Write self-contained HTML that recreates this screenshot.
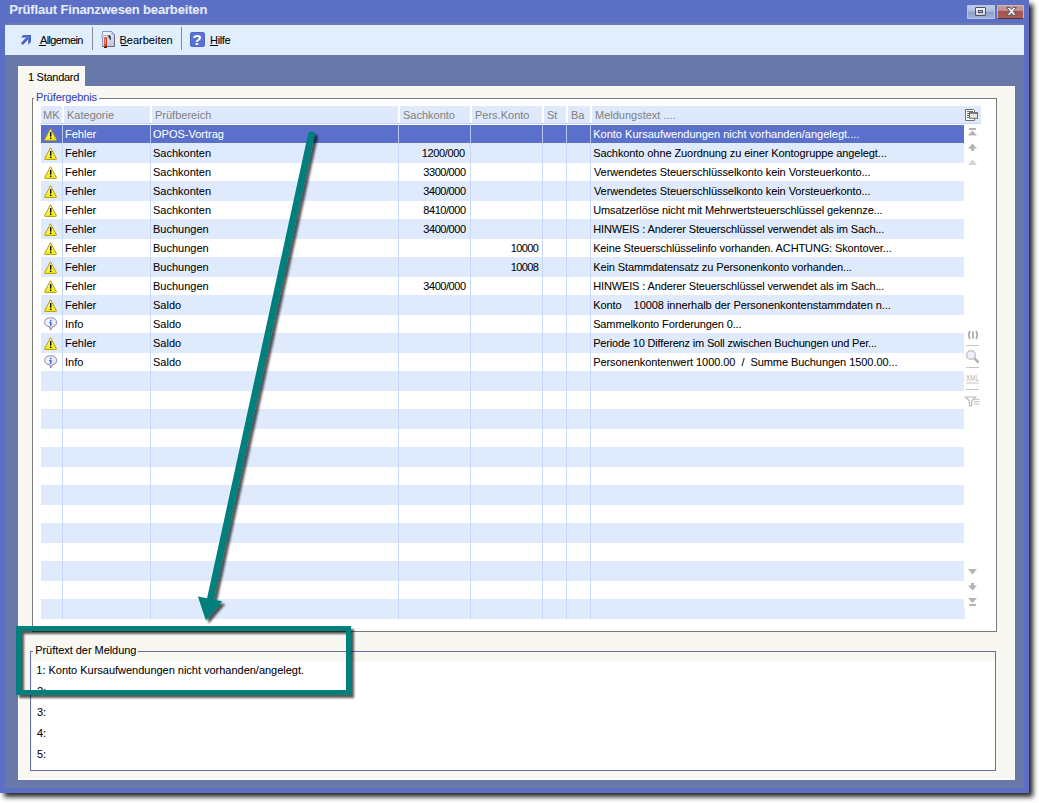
<!DOCTYPE html>
<html><head><meta charset="utf-8">
<style>
*{margin:0;padding:0;box-sizing:border-box}
html,body{width:1039px;height:803px;overflow:hidden;background:#fff}
body{position:relative;font-family:"Liberation Sans",sans-serif;font-size:11px;color:#000}
.a{position:absolute}
.t{position:absolute;white-space:pre;line-height:13px;-webkit-text-stroke:0.06px currentColor}
#win{left:0;top:0;width:1029px;height:793px;background:#5b70c5;box-shadow:4px 4px 5px rgba(0,0,0,.85)}
.hd{position:absolute;top:106px;height:17px;background:#dee9fb}
.hdt{position:absolute;top:109px;color:#808080;white-space:pre;line-height:13px}
.ln{position:absolute;width:1px;background:#c8d8fa}
.rowb{position:absolute;left:41px;width:923px;height:20px;background:#dfebfd}
.ct{position:absolute;white-space:pre;line-height:13px;-webkit-text-stroke:0.06px currentColor}
.ic{position:absolute}
</style></head><body>
<div id="win" class="a"></div>

<div id="f_title" class="t" style="left:9.16px;top:2px;letter-spacing:-0.160px;font-size:13px;font-weight:bold;color:#e6ebf7;line-height:15px">Prüflaut Finanzwesen bearbeiten</div>
<div class="a" style="left:967px;top:5px;width:28px;height:14px;background:linear-gradient(#c0cdea 0,#aab9de 45%,#8e9ec4 50%,#a0b0d8 100%);border:1px solid #b8c4e4"></div>
<div class="a" style="left:975px;top:7px;width:11px;height:9px;border:1px solid #505068;border-radius:1px;background:linear-gradient(#f4f4f8,#c8ccd8)"></div>
<div class="a" style="left:978px;top:10px;width:5px;height:3px;border:1px solid #505068;background:#a8b8d8"></div>
<div class="a" style="left:997px;top:5px;width:27px;height:14px;background:linear-gradient(#c69c9c 0,#bc8c8a 40%,#a4544c 44%,#aa5e56 100%);border:1px solid #d8b0a8;border-bottom-color:#603030"></div>
<svg class="a" style="left:1002px;top:5px" width="16" height="13" viewBox="-2 0 16 13"><path d="M2.70 2.45 L6.00 2.45 L7.60 4.39 L9.20 2.45 L12.50 2.45 L9.25 6.40 L12.50 10.35 L9.20 10.35 L7.60 8.41 L6.00 10.35 L2.70 10.35 L5.95 6.40 Z" fill="#f2f2f6" stroke="#4c4c60" stroke-width="0.9" stroke-linejoin="round"/></svg>
<div class="a" style="left:5px;top:23px;width:1019px;height:2px;background:#6a7ab0"></div>
<div class="a" style="left:5px;top:25px;width:1019px;height:30px;background:#e1eefd"></div>
<div class="a" style="left:5px;top:55px;width:1019px;height:733px;background:#6878a8"></div>
<svg class="a" style="left:20px;top:34px" width="12" height="12" viewBox="0 0 12 12"><path d="M3.2 1.1 L11 1.1 L11 8 L8.2 10.7 L8.2 3.6 L0.9 3.6 Z" fill="#4a62cc"/><path d="M0.9 9 L6.8 3.1 L8.7 5 L2.8 10.9 Z" fill="#4a62cc"/></svg>
<div id="f_allg" class="t" style="left:39.92px;top:34px;letter-spacing:-0.600px;">Allgemein</div><div class="a" style="left:39px;top:45px;width:7px;height:1px;background:#000"></div>
<div class="a" style="left:92px;top:27px;width:1px;height:23px;background:#8a8a8a"></div>
<svg class="a" style="left:100px;top:30px" width="17" height="19" viewBox="0 0 17 19"><defs><linearGradient id="dg" x1="0" y1="0" x2="0.6" y2="1"><stop offset="0" stop-color="#ffffff"/><stop offset="1" stop-color="#bcc6f4"/></linearGradient></defs><path d="M2.5 1.5 H11.5 L14.5 4.5 V16.5 H2.5 Z" fill="url(#dg)" stroke="#7e94dc"/><path d="M14.5 4.5 V16.5 H2.5" fill="none" stroke="#6c6c6c"/><path d="M11.5 1.5 L14.5 4.5 H11.5 Z" fill="#7ea0f0"/><rect x="1.5" y="5.2" width="8" height="2.6" fill="#9c9c9c"/><rect x="2" y="5.8" width="6" height="1" fill="#f4f4f4"/><path d="M8.6 5.6 Q10.6 6 10.2 9.6" fill="none" stroke="#111" stroke-width="1.3"/><rect x="4.2" y="7.8" width="2.8" height="10" fill="#e23a0a"/><rect x="4.8" y="9" width="0.9" height="5" fill="#ffb070"/><rect x="4.2" y="16.6" width="2.8" height="1.4" fill="#401008"/></svg>
<div id="f_bearb" class="t" style="left:119.52px;top:34px;">Bearbeiten</div><div class="a" style="left:121px;top:45px;width:7px;height:1px;background:#000"></div>
<div class="a" style="left:181px;top:27px;width:1px;height:23px;background:#8a8a8a"></div>
<div class="a" style="left:190px;top:32px;width:15px;height:15px;border-radius:2px;background:#5a72d4;border:1px solid #5068c8"></div>
<div class="t" style="left:189px;top:31px;width:16px;text-align:center;color:#fff;font-weight:bold;font-size:15px;line-height:17px">?</div>
<div id="f_hilfe" class="t" style="left:210.12px;top:34px;letter-spacing:-0.400px;">Hilfe</div><div class="a" style="left:210px;top:45px;width:8px;height:1px;background:#000"></div>
<div class="a" style="left:18px;top:66px;width:67px;height:21px;background:#f8f7f2;border-top:1px solid #fdfdfc;border-left:1px solid #fdfdfc;border-right:1px solid #fdfdfc"></div>
<div id="f_tab" class="t" style="left:27.96px;top:71px;letter-spacing:-0.267px;">1 Standard</div>
<div class="a" style="left:18px;top:86px;width:997px;height:694px;background:#f8f7f2;border-left:1px solid #fdfdfc;border-top:1px solid #fdfdfc;border-right:1px solid #fefef8;border-bottom:1px solid #fefef8"></div>
<div class="a" style="left:19px;top:85px;width:65px;height:3px;background:#f8f7f2"></div>
<div class="a" style="left:32px;top:98px;width:965px;height:534px;background:#fff;border:1px solid #7a7a7a"></div>
<div class="a" style="left:34px;top:92px;width:65px;height:10px;background:#f8f7f2"></div>
<div id="f_pe" class="t" style="left:36.00px;top:92px;letter-spacing:-0.120px;color:#3042c4;line-height:11px">Prüfergebnis</div>
<div class="hd" style="left:41px;width:21px"></div>
<div class="hdt" style="left:43px">MK</div>
<div class="hd" style="left:64px;width:86px"></div>
<div class="hdt" style="left:67px">Kategorie</div>
<div class="hd" style="left:152px;width:246px"></div>
<div class="hdt" style="left:155px">Prüfbereich</div>
<div class="hd" style="left:400px;width:70px"></div>
<div class="hdt" style="left:403px">Sachkonto</div>
<div class="hd" style="left:472px;width:70px"></div>
<div class="hdt" style="left:475px">Pers.Konto</div>
<div class="hd" style="left:544px;width:22px"></div>
<div class="hdt" style="left:547px">St</div>
<div class="hd" style="left:568px;width:22px"></div>
<div class="hdt" style="left:571px">Ba</div>
<div class="hd" style="left:592px;width:389px"></div>
<div class="hdt" style="left:595px">Meldungstext ....</div>
<div class="a" style="left:41px;top:123px;width:940px;height:1px;background:#c4d6f6"></div>
<svg class="a" style="left:965px;top:109px" width="14" height="13" viewBox="0 0 14 13"><path d="M0.5 0.5 H8.3 L9.5 1.7 V11.5 H0.5 Z" fill="#fff" stroke="#6e6e6e"/><rect x="2" y="2" width="6" height="1" fill="#6e6e6e"/><rect x="2" y="4" width="2.5" height="1" fill="#6e6e6e"/><rect x="2" y="6" width="2.5" height="1" fill="#6e6e6e"/><rect x="2" y="8" width="2.5" height="1" fill="#6e6e6e"/><rect x="4.5" y="3.7" width="8" height="5.6" fill="#e6e6de" stroke="#6e6e6e"/><rect x="4" y="3.2" width="9" height="1.6" fill="#6e6e6e"/></svg>
<div class="rowb" style="top:143px"></div>
<div class="rowb" style="top:181px"></div>
<div class="rowb" style="top:219px"></div>
<div class="rowb" style="top:257px"></div>
<div class="rowb" style="top:295px"></div>
<div class="rowb" style="top:333px"></div>
<div class="rowb" style="top:371px"></div>
<div class="rowb" style="top:409px"></div>
<div class="rowb" style="top:447px"></div>
<div class="rowb" style="top:485px"></div>
<div class="rowb" style="top:523px"></div>
<div class="rowb" style="top:561px"></div>
<div class="rowb" style="top:599px"></div>
<div class="a" style="left:41px;top:125px;width:923px;height:18px;background:#5a70cb"></div>
<div class="a" style="left:964px;top:609px;width:1px;height:10px;background:#dfebfd"></div>
<div class="ln" style="left:62px;top:124px;height:496px"></div>
<div class="ln" style="left:62px;top:125px;height:18px;background:#b8c6ee"></div>
<div class="ln" style="left:150px;top:124px;height:496px"></div>
<div class="ln" style="left:150px;top:125px;height:18px;background:#b8c6ee"></div>
<div class="ln" style="left:398px;top:124px;height:496px"></div>
<div class="ln" style="left:398px;top:125px;height:18px;background:#b8c6ee"></div>
<div class="ln" style="left:470px;top:124px;height:496px"></div>
<div class="ln" style="left:470px;top:125px;height:18px;background:#b8c6ee"></div>
<div class="ln" style="left:542px;top:124px;height:496px"></div>
<div class="ln" style="left:542px;top:125px;height:18px;background:#b8c6ee"></div>
<div class="ln" style="left:566px;top:124px;height:496px"></div>
<div class="ln" style="left:566px;top:125px;height:18px;background:#b8c6ee"></div>
<div class="ln" style="left:590px;top:124px;height:496px"></div>
<div class="ln" style="left:590px;top:125px;height:18px;background:#b8c6ee"></div>
<div class="a" style="left:44px;top:128px;width:13px;height:13px"><svg width="13" height="13" viewBox="0 0 13 13"><defs><linearGradient id="wg0" x1="0" y1="0" x2="0" y2="1"><stop offset="0" stop-color="#fffbb0"/><stop offset="1" stop-color="#f4ec00"/></linearGradient></defs><path d="M6.5 0.7 L12.4 11.6 Q12.6 12.4 11.8 12.4 L1.2 12.4 Q0.4 12.4 0.6 11.6 Z" fill="url(#wg0)" stroke="#b8961a" stroke-width="1"/><rect x="6" y="4" width="1.4" height="4.6" fill="#000"/><rect x="6" y="9.6" width="1.4" height="1.4" fill="#000"/></svg></div>
<div id="f_kat0" class="ct" style="left:65.00px;top:128px;color:#fff">Fehler</div>
<div id="f_ber0" class="ct" style="left:153.00px;top:128px;color:#fff">OPOS-Vortrag</div>
<div id="f_msg0" class="ct" style="left:593.16px;top:128px;letter-spacing:0.016px;color:#fff">Konto Kursaufwendungen nicht vorhanden/angelegt....</div>
<div class="a" style="left:44px;top:147px;width:13px;height:13px"><svg width="13" height="13" viewBox="0 0 13 13"><defs><linearGradient id="wg1" x1="0" y1="0" x2="0" y2="1"><stop offset="0" stop-color="#fffbb0"/><stop offset="1" stop-color="#f4ec00"/></linearGradient></defs><path d="M6.5 0.7 L12.4 11.6 Q12.6 12.4 11.8 12.4 L1.2 12.4 Q0.4 12.4 0.6 11.6 Z" fill="url(#wg1)" stroke="#b8961a" stroke-width="1"/><rect x="6" y="4" width="1.4" height="4.6" fill="#000"/><rect x="6" y="9.6" width="1.4" height="1.4" fill="#000"/></svg></div>
<div id="f_kat1" class="ct" style="left:65.00px;top:147px;color:#000">Fehler</div>
<div id="f_ber1" class="ct" style="left:153.00px;top:147px;color:#000">Sachkonten</div>
<div id="f_sk1" class="ct" style="right:574.24px;top:147px;letter-spacing:-0.343px;color:#000">1200/000</div>
<div id="f_msg1" class="ct" style="left:593.16px;top:147px;letter-spacing:-0.086px;color:#000">Sachkonto ohne Zuordnung zu einer Kontogruppe angelegt...</div>
<div class="a" style="left:44px;top:166px;width:13px;height:13px"><svg width="13" height="13" viewBox="0 0 13 13"><defs><linearGradient id="wg2" x1="0" y1="0" x2="0" y2="1"><stop offset="0" stop-color="#fffbb0"/><stop offset="1" stop-color="#f4ec00"/></linearGradient></defs><path d="M6.5 0.7 L12.4 11.6 Q12.6 12.4 11.8 12.4 L1.2 12.4 Q0.4 12.4 0.6 11.6 Z" fill="url(#wg2)" stroke="#b8961a" stroke-width="1"/><rect x="6" y="4" width="1.4" height="4.6" fill="#000"/><rect x="6" y="9.6" width="1.4" height="1.4" fill="#000"/></svg></div>
<div id="f_kat2" class="ct" style="left:65.00px;top:166px;color:#000">Fehler</div>
<div id="f_ber2" class="ct" style="left:153.00px;top:166px;color:#000">Sachkonten</div>
<div id="f_sk2" class="ct" style="right:573.44px;top:166px;letter-spacing:-0.457px;color:#000">3300/000</div>
<div id="f_msg2" class="ct" style="left:593.96px;top:166px;letter-spacing:-0.074px;color:#000">Verwendetes Steuerschlüsselkonto kein Vorsteuerkonto...</div>
<div class="a" style="left:44px;top:185px;width:13px;height:13px"><svg width="13" height="13" viewBox="0 0 13 13"><defs><linearGradient id="wg3" x1="0" y1="0" x2="0" y2="1"><stop offset="0" stop-color="#fffbb0"/><stop offset="1" stop-color="#f4ec00"/></linearGradient></defs><path d="M6.5 0.7 L12.4 11.6 Q12.6 12.4 11.8 12.4 L1.2 12.4 Q0.4 12.4 0.6 11.6 Z" fill="url(#wg3)" stroke="#b8961a" stroke-width="1"/><rect x="6" y="4" width="1.4" height="4.6" fill="#000"/><rect x="6" y="9.6" width="1.4" height="1.4" fill="#000"/></svg></div>
<div id="f_kat3" class="ct" style="left:65.00px;top:185px;color:#000">Fehler</div>
<div id="f_ber3" class="ct" style="left:153.00px;top:185px;color:#000">Sachkonten</div>
<div id="f_sk3" class="ct" style="right:573.44px;top:185px;letter-spacing:-0.457px;color:#000">3400/000</div>
<div id="f_msg3" class="ct" style="left:593.96px;top:185px;letter-spacing:-0.074px;color:#000">Verwendetes Steuerschlüsselkonto kein Vorsteuerkonto...</div>
<div class="a" style="left:44px;top:204px;width:13px;height:13px"><svg width="13" height="13" viewBox="0 0 13 13"><defs><linearGradient id="wg4" x1="0" y1="0" x2="0" y2="1"><stop offset="0" stop-color="#fffbb0"/><stop offset="1" stop-color="#f4ec00"/></linearGradient></defs><path d="M6.5 0.7 L12.4 11.6 Q12.6 12.4 11.8 12.4 L1.2 12.4 Q0.4 12.4 0.6 11.6 Z" fill="url(#wg4)" stroke="#b8961a" stroke-width="1"/><rect x="6" y="4" width="1.4" height="4.6" fill="#000"/><rect x="6" y="9.6" width="1.4" height="1.4" fill="#000"/></svg></div>
<div id="f_kat4" class="ct" style="left:65.00px;top:204px;color:#000">Fehler</div>
<div id="f_ber4" class="ct" style="left:153.00px;top:204px;color:#000">Sachkonten</div>
<div id="f_sk4" class="ct" style="right:573.44px;top:204px;letter-spacing:-0.457px;color:#000">8410/000</div>
<div id="f_msg4" class="ct" style="left:593.16px;top:204px;letter-spacing:-0.112px;color:#000">Umsatzerlöse nicht mit Mehrwertsteuerschlüssel gekennze...</div>
<div class="a" style="left:44px;top:223px;width:13px;height:13px"><svg width="13" height="13" viewBox="0 0 13 13"><defs><linearGradient id="wg5" x1="0" y1="0" x2="0" y2="1"><stop offset="0" stop-color="#fffbb0"/><stop offset="1" stop-color="#f4ec00"/></linearGradient></defs><path d="M6.5 0.7 L12.4 11.6 Q12.6 12.4 11.8 12.4 L1.2 12.4 Q0.4 12.4 0.6 11.6 Z" fill="url(#wg5)" stroke="#b8961a" stroke-width="1"/><rect x="6" y="4" width="1.4" height="4.6" fill="#000"/><rect x="6" y="9.6" width="1.4" height="1.4" fill="#000"/></svg></div>
<div id="f_kat5" class="ct" style="left:65.00px;top:223px;color:#000">Fehler</div>
<div id="f_ber5" class="ct" style="left:153.00px;top:223px;color:#000">Buchungen</div>
<div id="f_sk5" class="ct" style="right:573.44px;top:223px;letter-spacing:-0.457px;color:#000">3400/000</div>
<div id="f_msg5" class="ct" style="left:593.16px;top:223px;letter-spacing:-0.126px;color:#000">HINWEIS : Anderer Steuerschlüssel verwendet als im Sach...</div>
<div class="a" style="left:44px;top:242px;width:13px;height:13px"><svg width="13" height="13" viewBox="0 0 13 13"><defs><linearGradient id="wg6" x1="0" y1="0" x2="0" y2="1"><stop offset="0" stop-color="#fffbb0"/><stop offset="1" stop-color="#f4ec00"/></linearGradient></defs><path d="M6.5 0.7 L12.4 11.6 Q12.6 12.4 11.8 12.4 L1.2 12.4 Q0.4 12.4 0.6 11.6 Z" fill="url(#wg6)" stroke="#b8961a" stroke-width="1"/><rect x="6" y="4" width="1.4" height="4.6" fill="#000"/><rect x="6" y="9.6" width="1.4" height="1.4" fill="#000"/></svg></div>
<div id="f_kat6" class="ct" style="left:65.00px;top:242px;color:#000">Fehler</div>
<div id="f_ber6" class="ct" style="left:153.00px;top:242px;color:#000">Buchungen</div>
<div id="f_pk6" class="ct" style="right:500.64px;top:242px;letter-spacing:-0.600px;color:#000">10000</div>
<div id="f_msg6" class="ct" style="left:593.16px;top:242px;letter-spacing:-0.126px;color:#000">Keine Steuerschlüsselinfo vorhanden. ACHTUNG: Skontover...</div>
<div class="a" style="left:44px;top:261px;width:13px;height:13px"><svg width="13" height="13" viewBox="0 0 13 13"><defs><linearGradient id="wg7" x1="0" y1="0" x2="0" y2="1"><stop offset="0" stop-color="#fffbb0"/><stop offset="1" stop-color="#f4ec00"/></linearGradient></defs><path d="M6.5 0.7 L12.4 11.6 Q12.6 12.4 11.8 12.4 L1.2 12.4 Q0.4 12.4 0.6 11.6 Z" fill="url(#wg7)" stroke="#b8961a" stroke-width="1"/><rect x="6" y="4" width="1.4" height="4.6" fill="#000"/><rect x="6" y="9.6" width="1.4" height="1.4" fill="#000"/></svg></div>
<div id="f_kat7" class="ct" style="left:65.00px;top:261px;color:#000">Fehler</div>
<div id="f_ber7" class="ct" style="left:153.00px;top:261px;color:#000">Buchungen</div>
<div id="f_pk7" class="ct" style="right:500.64px;top:261px;letter-spacing:-0.600px;color:#000">10008</div>
<div id="f_msg7" class="ct" style="left:593.16px;top:261px;letter-spacing:-0.100px;color:#000">Kein Stammdatensatz zu Personenkonto vorhanden...</div>
<div class="a" style="left:44px;top:280px;width:13px;height:13px"><svg width="13" height="13" viewBox="0 0 13 13"><defs><linearGradient id="wg8" x1="0" y1="0" x2="0" y2="1"><stop offset="0" stop-color="#fffbb0"/><stop offset="1" stop-color="#f4ec00"/></linearGradient></defs><path d="M6.5 0.7 L12.4 11.6 Q12.6 12.4 11.8 12.4 L1.2 12.4 Q0.4 12.4 0.6 11.6 Z" fill="url(#wg8)" stroke="#b8961a" stroke-width="1"/><rect x="6" y="4" width="1.4" height="4.6" fill="#000"/><rect x="6" y="9.6" width="1.4" height="1.4" fill="#000"/></svg></div>
<div id="f_kat8" class="ct" style="left:65.00px;top:280px;color:#000">Fehler</div>
<div id="f_ber8" class="ct" style="left:153.00px;top:280px;color:#000">Buchungen</div>
<div id="f_sk8" class="ct" style="right:573.44px;top:280px;letter-spacing:-0.457px;color:#000">3400/000</div>
<div id="f_msg8" class="ct" style="left:593.16px;top:280px;letter-spacing:-0.126px;color:#000">HINWEIS : Anderer Steuerschlüssel verwendet als im Sach...</div>
<div class="a" style="left:44px;top:299px;width:13px;height:13px"><svg width="13" height="13" viewBox="0 0 13 13"><defs><linearGradient id="wg9" x1="0" y1="0" x2="0" y2="1"><stop offset="0" stop-color="#fffbb0"/><stop offset="1" stop-color="#f4ec00"/></linearGradient></defs><path d="M6.5 0.7 L12.4 11.6 Q12.6 12.4 11.8 12.4 L1.2 12.4 Q0.4 12.4 0.6 11.6 Z" fill="url(#wg9)" stroke="#b8961a" stroke-width="1"/><rect x="6" y="4" width="1.4" height="4.6" fill="#000"/><rect x="6" y="9.6" width="1.4" height="1.4" fill="#000"/></svg></div>
<div id="f_kat9" class="ct" style="left:65.00px;top:299px;color:#000">Fehler</div>
<div id="f_ber9" class="ct" style="left:153.00px;top:299px;color:#000">Saldo</div>
<div id="f_msg9" class="ct" style="left:593.16px;top:299px;letter-spacing:-0.056px;color:#000">Konto    10008 innerhalb der Personenkontenstammdaten n...</div>
<div class="a" style="left:44px;top:317px;width:14px;height:14px"><svg width="14" height="14" viewBox="0 0 14 14"><defs><linearGradient id="ig" x1="0" y1="0" x2="1" y2="1"><stop offset="0" stop-color="#ffffff"/><stop offset="1" stop-color="#d8d4f0"/></linearGradient></defs><path d="M6.6 0.8 C10.6 0.8 12.6 2.7 12.6 5.4 C12.6 8 10.8 9.6 8.4 9.9 L6.4 13.2 L6.1 9.9 C2.8 9.6 0.7 8 0.7 5.4 C0.7 2.7 2.7 0.8 6.6 0.8 Z" fill="url(#ig)" stroke="#8a869c" stroke-width="1"/><rect x="6" y="2.8" width="1.5" height="1.4" fill="#2a64e0"/><rect x="6" y="4.9" width="1.5" height="3.8" fill="#2a64e0"/><rect x="5.2" y="4.9" width="1" height="1" fill="#2a64e0"/></svg></div>
<div id="f_kat10" class="ct" style="left:65.00px;top:318px;color:#000">Info</div>
<div id="f_ber10" class="ct" style="left:153.00px;top:318px;color:#000">Saldo</div>
<div id="f_msg10" class="ct" style="left:593.16px;top:318px;letter-spacing:-0.119px;color:#000">Sammelkonto Forderungen 0...</div>
<div class="a" style="left:44px;top:337px;width:13px;height:13px"><svg width="13" height="13" viewBox="0 0 13 13"><defs><linearGradient id="wg11" x1="0" y1="0" x2="0" y2="1"><stop offset="0" stop-color="#fffbb0"/><stop offset="1" stop-color="#f4ec00"/></linearGradient></defs><path d="M6.5 0.7 L12.4 11.6 Q12.6 12.4 11.8 12.4 L1.2 12.4 Q0.4 12.4 0.6 11.6 Z" fill="url(#wg11)" stroke="#b8961a" stroke-width="1"/><rect x="6" y="4" width="1.4" height="4.6" fill="#000"/><rect x="6" y="9.6" width="1.4" height="1.4" fill="#000"/></svg></div>
<div id="f_kat11" class="ct" style="left:65.00px;top:337px;color:#000">Fehler</div>
<div id="f_ber11" class="ct" style="left:153.00px;top:337px;color:#000">Saldo</div>
<div id="f_msg11" class="ct" style="left:593.16px;top:337px;letter-spacing:-0.168px;color:#000">Periode 10 Differenz im Soll zwischen Buchungen und Per...</div>
<div class="a" style="left:44px;top:355px;width:14px;height:14px"><svg width="14" height="14" viewBox="0 0 14 14"><defs><linearGradient id="ig" x1="0" y1="0" x2="1" y2="1"><stop offset="0" stop-color="#ffffff"/><stop offset="1" stop-color="#d8d4f0"/></linearGradient></defs><path d="M6.6 0.8 C10.6 0.8 12.6 2.7 12.6 5.4 C12.6 8 10.8 9.6 8.4 9.9 L6.4 13.2 L6.1 9.9 C2.8 9.6 0.7 8 0.7 5.4 C0.7 2.7 2.7 0.8 6.6 0.8 Z" fill="url(#ig)" stroke="#8a869c" stroke-width="1"/><rect x="6" y="2.8" width="1.5" height="1.4" fill="#2a64e0"/><rect x="6" y="4.9" width="1.5" height="3.8" fill="#2a64e0"/><rect x="5.2" y="4.9" width="1" height="1" fill="#2a64e0"/></svg></div>
<div id="f_kat12" class="ct" style="left:65.00px;top:356px;color:#000">Info</div>
<div id="f_ber12" class="ct" style="left:153.00px;top:356px;color:#000">Saldo</div>
<div id="f_msg12" class="ct" style="left:593.16px;top:356px;letter-spacing:-0.057px;color:#000">Personenkontenwert 1000.00  /  Summe Buchungen 1500.00...</div>
<svg class="a" style="left:964px;top:124px" width="18" height="500" viewBox="0 0 18 500">
<g fill="#b4b4b4">
<rect x="5" y="4" width="7" height="2"/><path d="M8.5 6.5 L13 11.5 L4 11.5 Z"/>
<path d="M8.5 19.5 L13 24.5 L10 24.5 L10 27 L7 27 L7 24.5 L4 24.5 Z"/>
</g>
<path d="M8.5 35.5 L13 41 L4 41 Z" fill="#d4d4d4"/>
<g fill="#b4b4b4">
<path d="M4 445 L13 445 L8.5 450.5 Z"/>
<path d="M7 459 L10 459 L10 461.5 L13 461.5 L8.5 466.5 L4 461.5 L7 461.5 Z"/>
<path d="M4 474 L13 474 L8.5 479 Z"/><rect x="5" y="480" width="7" height="2"/>
</g>
</svg>
<svg class="a" style="left:964px;top:325px" width="18" height="85" viewBox="0 0 18 85">
<g fill="none" stroke="#a8a8a8" stroke-width="1.7">
<path d="M6 6 Q3.6 10 6 14 M12 6 Q14.4 10 12 14"/><path d="M9 6.5 V13.5"/>
</g>
<rect x="2" y="20" width="13" height="1" fill="#c4c4c4"/>
<circle cx="7" cy="30" r="4.4" fill="#eeeefc" stroke="#bcbcbc" stroke-width="1.3"/><path d="M10.2 33.2 L14.6 37.6" stroke="#b4b4b4" stroke-width="2.6"/>
<rect x="2" y="42" width="13" height="1" fill="#c4c4c4"/>
<text x="2" y="56.3" font-size="8.6" font-family="Liberation Sans" fill="#b8b8b8" textLength="13" lengthAdjust="spacingAndGlyphs">XML</text>
<rect x="2" y="57.5" width="13" height="1" fill="#c4c4c4"/>
<rect x="2" y="64" width="13" height="1" fill="#c4c4c4"/>
<path d="M1.5 72 L11.5 72 L7.6 76 L7.6 81 L5.4 81 L5.4 76 Z" fill="none" stroke="#bcbcbc" stroke-width="1.2"/>
<path d="M10 74.3 H15.6 M10 76.7 H15.6 M10 79.1 H15.6" stroke="#bcbcbc" stroke-width="1"/>
</svg>
<div class="a" style="left:30px;top:651px;width:966px;height:120px;background:#f8f7f2;border:1px solid #6272a8"></div>
<div class="a" style="left:32px;top:661px;width:963px;height:109px;background:#fff"></div>
<div class="a" style="left:33px;top:645px;width:105px;height:10px;background:#f8f7f2"></div>
<div id="f_ptm" class="t" style="left:35.16px;top:644px;letter-spacing:-0.042px;line-height:12px">Prüftext der Meldung</div>
<div id="f_ml0" class="t" style="left:36.36px;top:664px;letter-spacing:-0.016px;">1: Konto Kursaufwendungen nicht vorhanden/angelegt.</div>
<div id="f_ml1" class="t" style="left:37.00px;top:685px;">2:</div>
<div id="f_ml2" class="t" style="left:37.00px;top:706px;">3:</div>
<div id="f_ml3" class="t" style="left:37.00px;top:727px;">4:</div>
<div id="f_ml4" class="t" style="left:37.00px;top:748px;">5:</div>
<svg class="a" style="left:0;top:0" width="1039" height="803" viewBox="0 0 1039 803">
<defs><filter id="sh" x="-20%" y="-20%" width="140%" height="140%"><feDropShadow dx="3" dy="3" stdDeviation="1.3" flood-color="#000" flood-opacity="0.65"/></filter></defs>
<g filter="url(#sh)" fill="#00807b">
<path d="M311.4 134.6 L210.6 598" stroke="#00807b" stroke-width="6.8" stroke-linecap="round"/>
<path d="M197.9 596.4 L222.3 601.3 L205.9 620.4 Z"/>
<rect x="18.5" y="628.5" width="330" height="64" fill="none" stroke="#00807b" stroke-width="5"/>
</g>
</svg>
</body></html>
